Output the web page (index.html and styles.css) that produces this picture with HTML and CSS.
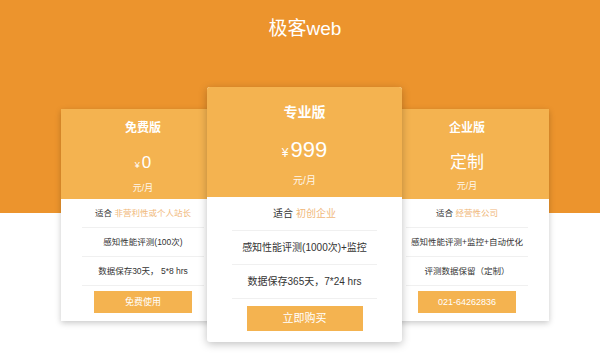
FILE: index.html
```html
<!DOCTYPE html>
<html lang="zh-CN">
<head>
    <meta charset="UTF-8">
    <meta name="viewport" content="width=device-width, initial-scale=1.0">
    <title>极客web - 价格</title>
    <link rel="stylesheet" href="styles.css">
</head>
<body>
    <div class="page">
        <div class="brand">极客web</div>

        <div class="plans">
            <div class="plan side left">
                <div class="plan-head">
                    <div class="plan-name">免费版</div>
                    <div class="plan-price"><span class="yen">¥</span>0</div>
                    <div class="plan-unit">元/月</div>
                </div>
                <div class="plan-body">
                    <div class="plan-row">适合 <span class="hl">非营利性或个人站长</span></div>
                    <div class="plan-row">感知性能评测(100次)</div>
                    <div class="plan-row">数据保存30天， 5*8 hrs</div>
                    <a href="#" class="plan-btn">免费使用</a>
                </div>
            </div>

            <div class="plan main">
                <div class="plan-head">
                    <div class="plan-name">专业版</div>
                    <div class="plan-price"><span class="yen">¥</span>999</div>
                    <div class="plan-unit">元/月</div>
                </div>
                <div class="plan-body">
                    <div class="plan-row">适合 <span class="hl">初创企业</span></div>
                    <div class="plan-row">感知性能评测(1000次)+监控</div>
                    <div class="plan-row">数据保存365天，7*24 hrs</div>
                    <a href="#" class="plan-btn">立即购买</a>
                </div>
            </div>

            <div class="plan side right">
                <div class="plan-head">
                    <div class="plan-name">企业版</div>
                    <div class="plan-price custom">定制</div>
                    <div class="plan-unit">元/月</div>
                </div>
                <div class="plan-body">
                    <div class="plan-row">适合 <span class="hl">经营性公司</span></div>
                    <div class="plan-row">感知性能评测+监控+自动优化</div>
                    <div class="plan-row">评测数据保留（定制）</div>
                    <a href="#" class="plan-btn">021-64262836</a>
                </div>
            </div>
        </div>
    </div>
</body>
</html>
```

FILE: styles.css
```css
* {
    margin: 0;
    padding: 0;
    box-sizing: border-box;
}

body {
    font-family: 'Liberation Sans', 'Noto Sans CJK SC', sans-serif;
    background: #fff;
    color: #333;
}

.page {
    width: 100%;
    height: 357px;
    background: linear-gradient(#ec942d 0, #ec942d 213px, #fff 213px);
    overflow: hidden;
}

.brand {
    padding-top: 17px;
    padding-left: 10px;
    text-align: center;
    color: #fff;
    font-size: 19px;
    line-height: 24px;
    height: 87px;
}

.plans {
    display: flex;
    justify-content: center;
    align-items: flex-start;
    padding-left: 10px;
}

.plan {
    background: #fff;
    text-align: center;
    box-shadow: 0 2px 6px rgba(0,0,0,0.22);
}

.plan.side {
    width: 164px;
    margin-top: 22px;
}

.plan.left {
    margin-right: -18px;
}

.plan.right {
    margin-left: -17px;
}

.plan.main {
    width: 195px;
    position: relative;
    z-index: 2;
    border-radius: 3px;
    overflow: hidden;
    box-shadow: 0 2px 8px rgba(0,0,0,0.25);
}

.plan-head {
    background: #f4b350;
    color: #fff;
}

.side .plan-head {
    height: 90px;
    padding-top: 10px;
}

.main .plan-head {
    height: 110px;
    padding-top: 15px;
}

.plan-name {
    font-weight: bold;
}

.side .plan-name {
    font-size: 12px;
    line-height: 18px;
}

.main .plan-name {
    font-size: 14px;
    line-height: 20px;
}

.plan-price {
    line-height: 24px;
}

.side .plan-price {
    font-size: 17px;
    margin-top: 14px;
}

.main .plan-price {
    font-size: 22px;
    line-height: 28px;
    margin-top: 14px;
}

.plan-price .yen {
    margin-right: 2px;
}

.side .yen {
    font-size: 9px;
}

.main .yen {
    font-size: 12px;
}

.plan-unit {
    opacity: 0.9;
}

.side .plan-unit {
    font-size: 9px;
    line-height: 14px;
    margin-top: 4px;
}

.main .plan-unit {
    font-size: 10px;
    line-height: 14px;
    margin-top: 7px;
}

.plan-body {
    display: flex;
    flex-direction: column;
    align-items: center;
}

.side .plan-body {
    padding: 0 21px 8px;
}

.main .plan-body {
    padding: 0 25px 11px;
}

.plan-row {
    width: 100%;
    border-bottom: 1px solid #f0f0f0;
    white-space: nowrap;
}

.side .plan-row {
    font-size: 8.5px;
    line-height: 28px;
}

.main .plan-row {
    font-size: 10px;
    line-height: 33px;
}

.hl {
    color: #f0b87a;
}

.plan-btn {
    display: block;
    background: #f4b350;
    color: #fff;
    text-decoration: none;
}

.side .plan-btn {
    width: 98px;
    height: 22px;
    line-height: 22px;
    font-size: 9px;
    margin-top: 5px;
}

.main .plan-btn {
    width: 116px;
    height: 25px;
    line-height: 25px;
    font-size: 11px;
    margin-top: 7px;
}
```
